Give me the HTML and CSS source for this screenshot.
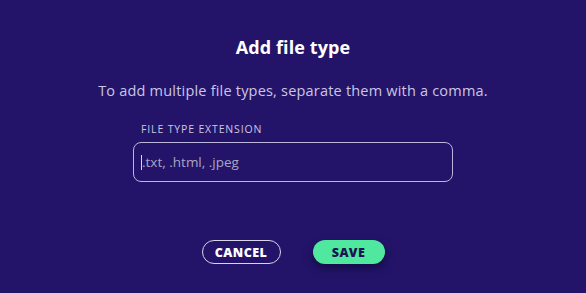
FILE: index.html
```html
<!DOCTYPE html>
<html>
<head>
<meta charset="utf-8">
<link rel="stylesheet" href="styles.css">
</head>
<body>
<div class="dialog">
  <h1 class="title">Add file type</h1>
  <p class="subtitle">To add multiple file types, separate them with a comma.</p>
  <div class="field">
    <label class="label">FILE TYPE EXTENSION</label>
    <div class="input"><span class="caret"></span><span class="placeholder">.txt, .html, .jpeg</span></div>
  </div>
  <div class="actions">
    <button class="btn cancel">CANCEL</button>
    <button class="btn save">SAVE</button>
  </div>
</div>
</body>
</html>
```
FILE: styles.css
```css
html, body {
  margin: 0;
  padding: 0;
  background: #23146a;
  width: 586px;
  height: 293px;
  overflow: hidden;
}
.dialog {
  font-family: "Open Sans", "Liberation Sans", sans-serif;
  display: flex;
  flex-direction: column;
  align-items: center;
  padding-top: 36px;
}
.title {
  margin: 0;
  font-size: 18px;
  font-weight: 700;
  color: #ffffff;
  line-height: 22px;
  letter-spacing: 0.1px;
}
.subtitle {
  margin: 24px 0 0;
  font-size: 14.5px;
  color: #cbc6e3;
  line-height: 18px;
  letter-spacing: 0.2px;
}
.field {
  margin-top: 23px;
  width: 320px;
  display: flex;
  flex-direction: column;
}
.label {
  font-size: 10.5px;
  color: #cbc6e3;
  padding-left: 8px;
  line-height: 13px;
  letter-spacing: 0.85px;
}
.input {
  margin-top: 6px;
  height: 38px;
  border: 1px solid #bdb6dc;
  border-radius: 8px;
  display: flex;
  align-items: center;
  padding-left: 7px;
}
.caret {
  width: 1px;
  height: 15px;
  background: #d8d4ea;
}
.placeholder {
  font-size: 13.5px;
  color: #a9a4c4;
}
.actions {
  margin-top: 58px;
  display: flex;
  gap: 32px;
}
.btn {
  font-family: "Open Sans", "Liberation Sans", sans-serif;
  font-weight: 800;
  font-size: 12.5px;
  border-radius: 12px;
  height: 24px;
  padding: 0;
  cursor: pointer;
  letter-spacing: 0.4px;
}
.cancel {
  width: 79px;
  background: transparent;
  color: #ffffff;
  border: 1px solid #d8d4ea;
}
.save {
  width: 72px;
  background: #4fe89e;
  color: #1c1254;
  border: none;
  box-shadow: 0 4px 10px rgba(10, 5, 40, 0.6);
}
```
